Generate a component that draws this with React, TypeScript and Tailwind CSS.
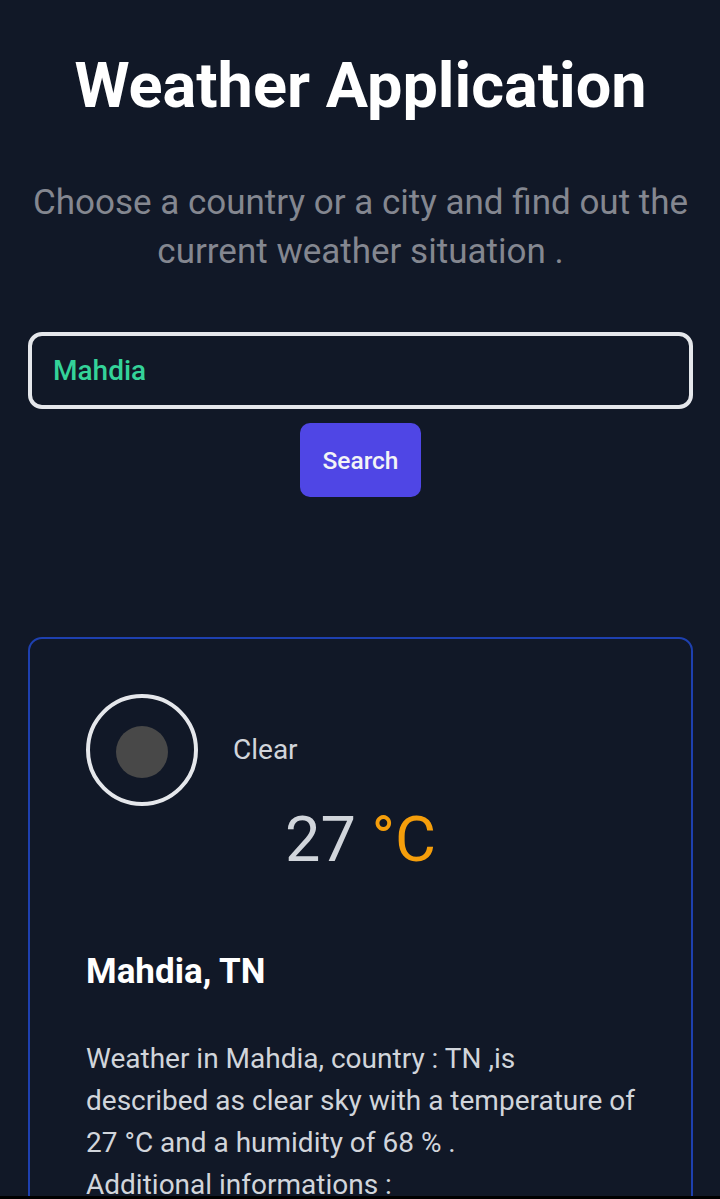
export default function App() {
  return (
    <div className="flex h-[1199px] flex-col overflow-hidden border-b-3 border-black bg-[#111827] pr-[27px] pl-7 font-['Roboto',sans-serif] text-[#d1d5db]">
      <h1 className="mt-[51px] text-center text-[63px] leading-[70px] font-bold whitespace-nowrap text-white">Weather Application</h1>
      <p className="mt-[57px] text-center text-[35px] leading-[49px] whitespace-nowrap text-[#848790]">
        Choose a country or a city and find out the
        <br />
        current weather situation .
      </p>
      <div className="mt-[56px] flex h-[77px] w-[665px] shrink-0 items-center rounded-[14px] border-4 border-[#e5e7eb] px-[21px] text-[28px] font-medium text-[#34d399]">Mahdia</div>
      <button className="mt-[14px] h-[74px] w-[121px] shrink-0 self-center rounded-[10px] bg-[#4f46e5] pt-[2px] text-[24.5px] font-medium text-[#f3f4f6]">Search</button>
      <section className="mt-[140px] h-[700px] w-[665px] shrink-0 rounded-[14px] border-2 border-[#1e40af] px-14 pt-[55px]">
        <div className="flex items-center gap-[35px] text-[28px]">
          <div className="flex size-28 items-center justify-center rounded-full border-4 border-[#e5e7eb] pt-[3px]">
            <div className="size-[52px] rounded-full bg-[#484848]" />
          </div>
          <span>Clear</span>
        </div>
        <div className="mt-px text-center text-[63px] leading-[66px]">27 <span className="text-[#f59e0b]">°C</span></div>
        <h2 className="mt-[74px] text-[35px] leading-[49px] font-bold text-white">Mahdia, TN</h2>
        <p className="mt-[42px] text-[28px] leading-[42px] whitespace-nowrap">
          Weather in Mahdia, country : TN ,is<br />
          described as clear sky with a temperature of<br />
          27 °C and a humidity of 68 % .<br />
          Additional informations :
        </p>
      </section>
    </div>
  );
}
